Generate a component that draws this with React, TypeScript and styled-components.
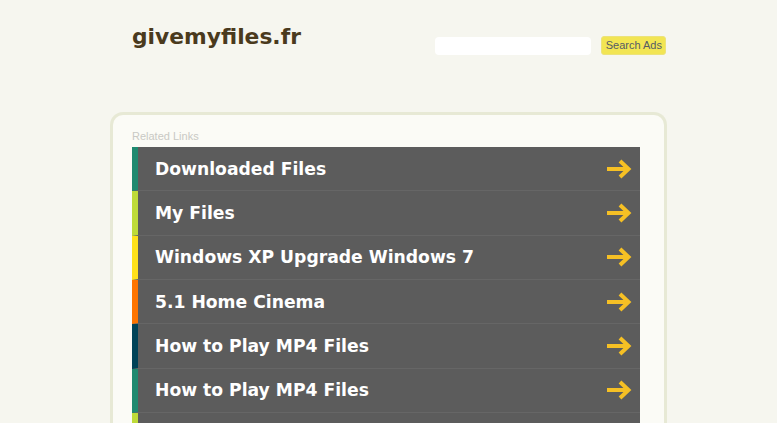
import React, { FC } from "react";
import styled, { createGlobalStyle } from "styled-components";

const GlobalStyle = createGlobalStyle`
    html, body {
        margin: 0;
        padding: 0;
        background: #f6f6ef;
        overflow: hidden;
    }
`;

const StyledPage = styled.div`
    width: 557px;
    margin: 0 auto;
    height: 423px;
    overflow: hidden;
`;

const StyledHeader = styled.div`
    display: flex;
    justify-content: space-between;
    align-items: flex-start;
    padding: 24px 1px 0 22px;
    height: 90px;
    box-sizing: border-box;
`;

const StyledLogo = styled.div`
    font-family: "DejaVu Sans", sans-serif;
    font-weight: 700;
    font-size: 21.8px;
    color: #4a3a1d;
`;

const StyledSearch = styled.form`
    display: flex;
    align-items: center;
    gap: 10px;
    margin-top: 13px;
`;

const StyledInput = styled.div`
    width: 156px;
    height: 18px;
    background: #ffffff;
    border-radius: 4px;
`;

const StyledButton = styled.div`
    height: 17px;
    padding: 0 3px 0 4px;
    background: #f2e553;
    border: 1px solid #ece37a;
    border-radius: 3px;
    font-family: "Liberation Sans", Arial, sans-serif;
    font-size: 11px;
    line-height: 17px;
    color: #555b66;
    margin-top: -1px;
`;

const StyledPanel = styled.div`
    margin-top: 22px;
    border: 3px solid #e7e9d5;
    border-bottom: none;
    border-radius: 13px 13px 0 0;
    background: #fbfbf6;
    padding: 15px 24px 0 18px;
    height: 320px;
    box-sizing: border-box;
`;

const StyledCaption = styled.div`
    font-family: "Liberation Sans", Arial, sans-serif;
    font-size: 11px;
    color: #c9c9c4;
    margin-left: 1px;
    height: 17px;
`;

const StyledList = styled.div`
    display: flex;
    flex-direction: column;
    margin-left: 1px;
`;

const StyledRow = styled.div<{ accent: string }>`
    display: flex;
    align-items: center;
    justify-content: space-between;
    flex-shrink: 0;
    height: 44.33px;
    box-sizing: border-box;
    background: #5c5c5c;
    border-left: 6px solid ${props => props.accent};
    border-bottom: 1px solid #666666;
    padding: 0 8px 0 17px;
    font-family: "DejaVu Sans", sans-serif;
    font-weight: 700;
    font-size: 17.2px;
    color: #ffffff;
    white-space: nowrap;
`;

const Arrow: FC = () => (
    <svg width="26" height="22" viewBox="0 0 26 22">
        <path d="M1 11 H22 M14 3 L22.5 11 L14 19" fill="none" stroke="#f6c024" strokeWidth="4" strokeLinejoin="miter" />
    </svg>
);

const links = [
    { title: "Downloaded Files", accent: "#1f8a70" },
    { title: "My Files", accent: "#bedb39" },
    { title: "Windows XP Upgrade Windows 7", accent: "#ffe11a" },
    { title: "5.1 Home Cinema", accent: "#fd7400" },
    { title: "How to Play MP4 Files", accent: "#004358" },
    { title: "How to Play MP4 Files", accent: "#1f8a70" },
    { title: "", accent: "#bedb39" },
];

const App: FC = () => {
    return (
        <>
            <GlobalStyle />
            <StyledPage>
                <StyledHeader>
                    <StyledLogo>givemyfiles.fr</StyledLogo>
                    <StyledSearch onSubmit={e => e.preventDefault()}>
                        <StyledInput />
                        <StyledButton>Search Ads</StyledButton>
                    </StyledSearch>
                </StyledHeader>
                <StyledPanel>
                    <StyledCaption>Related Links</StyledCaption>
                    <StyledList>
                        {links.map((l, id) => (
                            <StyledRow key={id} accent={l.accent}>
                                <span>{l.title}</span>
                                {l.title && <Arrow />}
                            </StyledRow>
                        ))}
                    </StyledList>
                </StyledPanel>
            </StyledPage>
        </>
    );
};

export default App;
